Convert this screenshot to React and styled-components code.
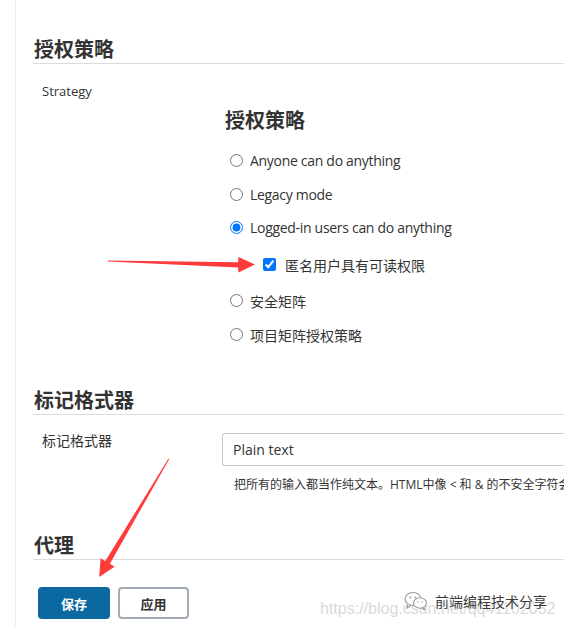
import React from "react";
import styled, { createGlobalStyle } from "styled-components";

const Global = createGlobalStyle`
  html, body { margin: 0; padding: 0; background: #fff; overflow: hidden; }
  body {
    font-family: "Open Sans", "Noto Sans CJK SC", sans-serif;
    color: #333;
  }
`;

const Page = styled.div`
  position: relative;
  display: flex;
  width: 720px;
  height: 627px;
`;

const Gutter = styled.div`
  flex: 0 0 15px;
  border-right: 1px solid #ebebeb;
`;

const Main = styled.main`
  flex: 1;
  padding: 37px 0 0 17px;
`;

const SectionTitle = styled.h2`
  margin: ${(p) => p.$mt || 0}px 0 0;
  padding: 0 0 2px 1px;
  font-family: "Noto Sans CJK SC", sans-serif;
  font-size: 20px;
  line-height: 24px;
  font-weight: 700;
  color: #333;
  border-bottom: 1px solid #dcdcdc;
`;

const FieldLabel = styled.div`
  padding-left: 9px;
  font-size: ${(p) => p.$size || 14}px;
  line-height: 18px;
  color: #333;
`;

const StrategyLabel = styled(FieldLabel)`
  margin-top: 18px;
`;

const Options = styled.div`
  margin: 8px 0 0 192px;
  display: flex;
  flex-direction: column;
`;

const SubTitle = styled.h3`
  margin: 0 0 12px;
  font-family: "Noto Sans CJK SC", sans-serif;
  font-size: 20px;
  line-height: 24px;
  font-weight: 700;
  color: #333;
`;

const Choice = styled.label`
  display: flex;
  align-items: center;
  height: 33px;
  margin-top: ${(p) => p.$mt || 0}px;
  padding-left: ${(p) => (p.$nested ? 38 : 5)}px;
  gap: ${(p) => (p.$nested ? 9 : 7)}px;
  font-size: 14px;
  letter-spacing: ${(p) => (p.$latin ? "-0.3px" : "0")};
  color: #333;
  white-space: nowrap;
`;

const Radio = styled.input.attrs({ type: "radio" })`
  margin: 0;
  width: 13px;
  height: 13px;
  accent-color: #0075ff;
`;

const Check = styled.input.attrs({ type: "checkbox" })`
  margin: 0;
  width: 13px;
  height: 13px;
  accent-color: #0075ff;
`;

const FieldRow = styled.div`
  display: grid;
  grid-template-columns: 189px 1fr;
  align-items: start;
  margin-top: 17px;
`;

const SelectBox = styled.div`
  height: 31px;
  margin-top: 1px;
  border: 1px solid #c8c8c8;
  border-right: none;
  border-radius: 3px 0 0 3px;
  display: flex;
  align-items: center;
  padding-left: 10px;
  font-size: 14px;
  color: #333;
`;

const Hint = styled.div`
  grid-column: 2;
  margin-top: 10px;
  padding-left: 12px;
  font-size: 12px;
  line-height: 18px;
  color: #333;
  white-space: nowrap;
`;

const Buttons = styled.div`
  display: flex;
  gap: 8px;
  margin: 27px 0 0 5px;
`;

const Button = styled.button`
  width: ${(p) => (p.$primary ? 72 : 71)}px;
  height: 32px;
  border-radius: 4px;
  font-family: "Noto Sans CJK SC", sans-serif;
  font-size: 13px;
  font-weight: 700;
  cursor: pointer;
  background: ${(p) => (p.$primary ? "#0b68a1" : "#fff")};
  color: ${(p) => (p.$primary ? "#fff" : "#333")};
  border: ${(p) => (p.$primary ? "none" : "2px solid #a3acb4")};
`;

const Overlay = styled.svg`
  position: absolute;
  left: 0;
  top: 0;
  width: 564px;
  height: 627px;
  pointer-events: none;
`;

const Watermark = styled.div`
  position: absolute;
  left: ${(p) => p.$x}px;
  top: ${(p) => p.$y}px;
  display: flex;
  align-items: center;
  gap: 7px;
  white-space: nowrap;
  pointer-events: none;
`;

const CsdnMark = styled.span`
  font-family: "Liberation Sans", sans-serif;
  font-size: 16px;
  color: #dadada;
`;

const WxName = styled.span`
  font-family: "Noto Sans CJK SC", sans-serif;
  font-size: 14px;
  color: #3a3a3a;
  text-shadow: 0 0 2px #fff, 0 0 2px #fff;
`;

function WeChatIcon() {
  return (
    <svg width="24" height="20" viewBox="0 0 24 20" fill="none" stroke="#9a9a9a" strokeWidth="1.1">
      <ellipse cx="9" cy="8" rx="8" ry="6.5" fill="#fff" />
      <path d="M4 13.5 L3 17 L7 14.3" fill="#fff" />
      <ellipse cx="16" cy="12" rx="6.5" ry="5.2" fill="#fff" />
      <path d="M19.5 16.6 L21 19 L18 17.2" fill="#fff" />
      <circle cx="6.3" cy="6.5" r="0.9" fill="#9a9a9a" stroke="none" />
      <circle cx="11.5" cy="6.5" r="0.9" fill="#9a9a9a" stroke="none" />
      <circle cx="14" cy="11" r="0.7" fill="#9a9a9a" stroke="none" />
      <circle cx="18" cy="11" r="0.7" fill="#9a9a9a" stroke="none" />
    </svg>
  );
}

export default function App() {
  return (
    <>
      <Global />
      <Page>
        <Gutter />
        <Main>
          <SectionTitle>授权策略</SectionTitle>
          <StrategyLabel $size={13}>Strategy</StrategyLabel>
          <Options>
            <SubTitle>授权策略</SubTitle>
            <Choice $latin>
              <Radio name="auth" />
              Anyone can do anything
            </Choice>
            <Choice $latin $mt={1}>
              <Radio name="auth" />
              Legacy mode
            </Choice>
            <Choice $latin>
              <Radio name="auth" defaultChecked />
              Logged-in users can do anything
            </Choice>
            <Choice $nested $mt={4}>
              <Check defaultChecked />
              匿名用户具有可读权限
            </Choice>
            <Choice $mt={3}>
              <Radio name="auth" />
              安全矩阵
            </Choice>
            <Choice $mt={1}>
              <Radio name="auth" />
              项目矩阵授权策略
            </Choice>
          </Options>

          <SectionTitle $mt={37}>标记格式器</SectionTitle>
          <FieldRow>
            <FieldLabel>标记格式器</FieldLabel>
            <SelectBox>Plain text</SelectBox>
            <Hint>把所有的输入都当作纯文本。HTML中像 &lt; 和 &amp; 的不安全字符会被转义为其对应的字符实体。</Hint>
          </FieldRow>

          <SectionTitle $mt={39}>代理</SectionTitle>
          <Buttons>
            <Button $primary>保存</Button>
            <Button>应用</Button>
          </Buttons>
        </Main>

        <Watermark $x={320} $y={600}>
          <CsdnMark>https://blog.csdn.net/qq41102052</CsdnMark>
        </Watermark>
        <Watermark $x={404} $y={591}>
          <WeChatIcon />
          <WxName>前端编程技术分享</WxName>
        </Watermark>

        <Overlay viewBox="0 0 564 627">
          <polygon
            fill="#ff3b3b"
            points="108,260.5 238,262.3 238.5,257 255,264.5 238.5,272.5 238,267.5 108,261.6"
          />
          <polygon
            fill="#ff3b3b"
            points="169.3,459 109.9,563.7 114.6,566.8 99.2,577 100.6,558.2 105.3,561 168.5,458.6"
          />
        </Overlay>
      </Page>
    </>
  );
}
